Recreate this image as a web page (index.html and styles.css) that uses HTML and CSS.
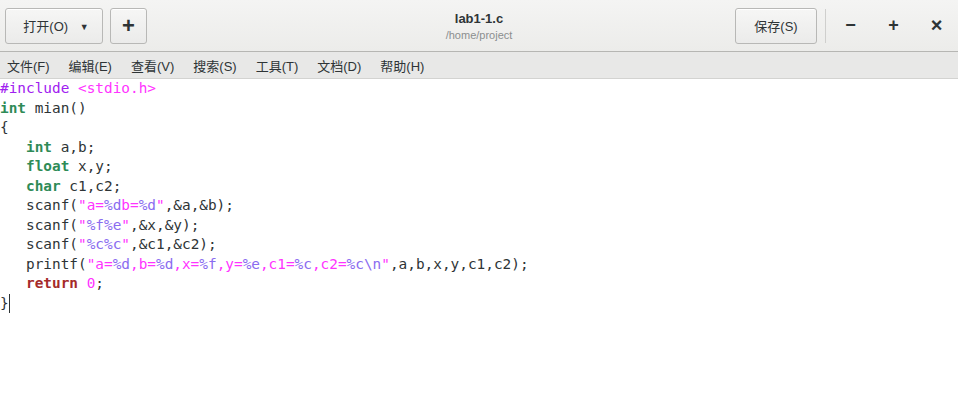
FILE: index.html
```html
<!DOCTYPE html>
<html lang="zh-CN">
<head>
    <meta charset="UTF-8">
    <title>lab1-1.c</title>
    <link rel="stylesheet" href="styles.css">
</head>
<body>

    <!-- Header bar -->
    <div class="headerbar">
        <div class="header-left">
            <button class="btn btn-open">打开(O) <span class="caret">&#9660;</span></button>
            <button class="btn btn-new">+</button>
        </div>
        <div class="title-box">
            <div class="title">lab1-1.c</div>
            <div class="subtitle">/home/project</div>
        </div>
        <div class="header-right">
            <button class="btn btn-save">保存(S)</button>
            <span class="sep"></span>
            <span class="win-btn">&#8722;</span>
            <span class="win-btn">+</span>
            <span class="win-btn win-close">&#215;</span>
        </div>
    </div>

    <!-- Menu bar -->
    <div class="menubar">
        <span class="menu-item">文件(F)</span>
        <span class="menu-item">编辑(E)</span>
        <span class="menu-item">查看(V)</span>
        <span class="menu-item">搜索(S)</span>
        <span class="menu-item">工具(T)</span>
        <span class="menu-item">文档(D)</span>
        <span class="menu-item">帮助(H)</span>
    </div>

    <!-- Editor -->
    <div class="editor">
        <div class="line"><span class="pre">#include </span><span class="str">&lt;stdio.h&gt;</span></div>
        <div class="line"><span class="type">int</span> mian()</div>
        <div class="line">{</div>
        <div class="line">   <span class="type">int</span> a,b;</div>
        <div class="line">   <span class="type">float</span> x,y;</div>
        <div class="line">   <span class="type">char</span> c1,c2;</div>
        <div class="line">   scanf(<span class="str">"a=<span class="fmt">%d</span>b=<span class="fmt">%d</span>"</span>,&amp;a,&amp;b);</div>
        <div class="line">   scanf(<span class="str">"<span class="fmt">%f%e</span>"</span>,&amp;x,&amp;y);</div>
        <div class="line">   scanf(<span class="str">"<span class="fmt">%c%c</span>"</span>,&amp;c1,&amp;c2);</div>
        <div class="line">   printf(<span class="str">"a=<span class="fmt">%d</span>,b=<span class="fmt">%d</span>,x=<span class="fmt">%f</span>,y=<span class="fmt">%e</span>,c1=<span class="fmt">%c</span>,c2=<span class="fmt">%c\n</span>"</span>,a,b,x,y,c1,c2);</div>
        <div class="line">   <span class="kw">return</span> <span class="num">0</span>;</div>
        <div class="line">}<span class="cursor"></span></div>
    </div>

</body>
</html>
```

FILE: styles.css
```css
* {
    margin: 0;
    padding: 0;
    box-sizing: border-box;
}

body {
    font-family: 'Liberation Sans', 'Noto Sans CJK SC', sans-serif;
    background-color: #ffffff;
    color: #2e3436;
    width: 958px;
    height: 409px;
    overflow: hidden;
}

/* Header bar */
.headerbar {
    height: 52px;
    display: flex;
    align-items: center;
    justify-content: space-between;
    padding: 0 0 0 5px;
    background: linear-gradient(#f4f4f3, #ececea);
    border-bottom: 1px solid #b6b6b3;
    position: relative;
}

.header-left,
.header-right {
    display: flex;
    align-items: center;
}

.btn {
    height: 36px;
    border: 1px solid #b8b8b6;
    border-radius: 3px;
    background: linear-gradient(#f6f6f5, #ebebea);
    color: #2e3436;
    font-family: 'Liberation Sans', 'Noto Sans CJK SC', sans-serif;
    font-size: 13px;
    box-shadow: inset 0 1px #ffffff;
}

.btn-open {
    width: 98px;
    padding-left: 4px;
}

.caret {
    font-size: 9px;
    margin-left: 8px;
    position: relative;
    top: -1px;
}

.btn-new {
    width: 37px;
    margin-left: 7px;
    font-size: 22px;
    font-weight: bold;
    line-height: 1;
}

.title-box {
    position: absolute;
    left: 0;
    right: 0;
    top: 10px;
    text-align: center;
    pointer-events: none;
}

.title {
    font-size: 13px;
    font-weight: bold;
    color: #2e3436;
    line-height: 17px;
}

.subtitle {
    font-size: 11px;
    color: #8b8e8f;
    line-height: 16px;
}

.btn-save {
    width: 82px;
}

.sep {
    width: 1px;
    height: 34px;
    background: #cfcfcd;
    margin: 0 3px 0 8px;
}

.win-btn {
    width: 43px;
    text-align: center;
    font-size: 18px;
    font-weight: bold;
    color: #2e3436;
}

.win-close {
    font-size: 20px;
}

/* Menu bar */
.menubar {
    height: 27px;
    display: flex;
    align-items: center;
    padding-left: 7px;
    background-color: #e8e8e7;
    border-bottom: 1px solid #d3d3d1;
    font-size: 13px;
    color: #2e3436;
}

.menu-item {
    margin-right: 19px;
}

/* Editor */
.editor {
    font-family: 'DejaVu Sans Mono', monospace;
    font-size: 14.4px;
    line-height: 19.5px;
    color: #2e3436;
}

.line {
    white-space: pre;
    height: 19.5px;
}

.pre { color: #a020f0; }
.str { color: #ff33ff; }
.fmt { color: #8a6cf0; }
.type { color: #2e8b57; font-weight: bold; }
.kw { color: #a52a2a; font-weight: bold; }
.num { color: #ff33ff; }

.cursor {
    display: inline-block;
    width: 1px;
    height: 19px;
    background: #2e3436;
    vertical-align: -5px;
}
```
